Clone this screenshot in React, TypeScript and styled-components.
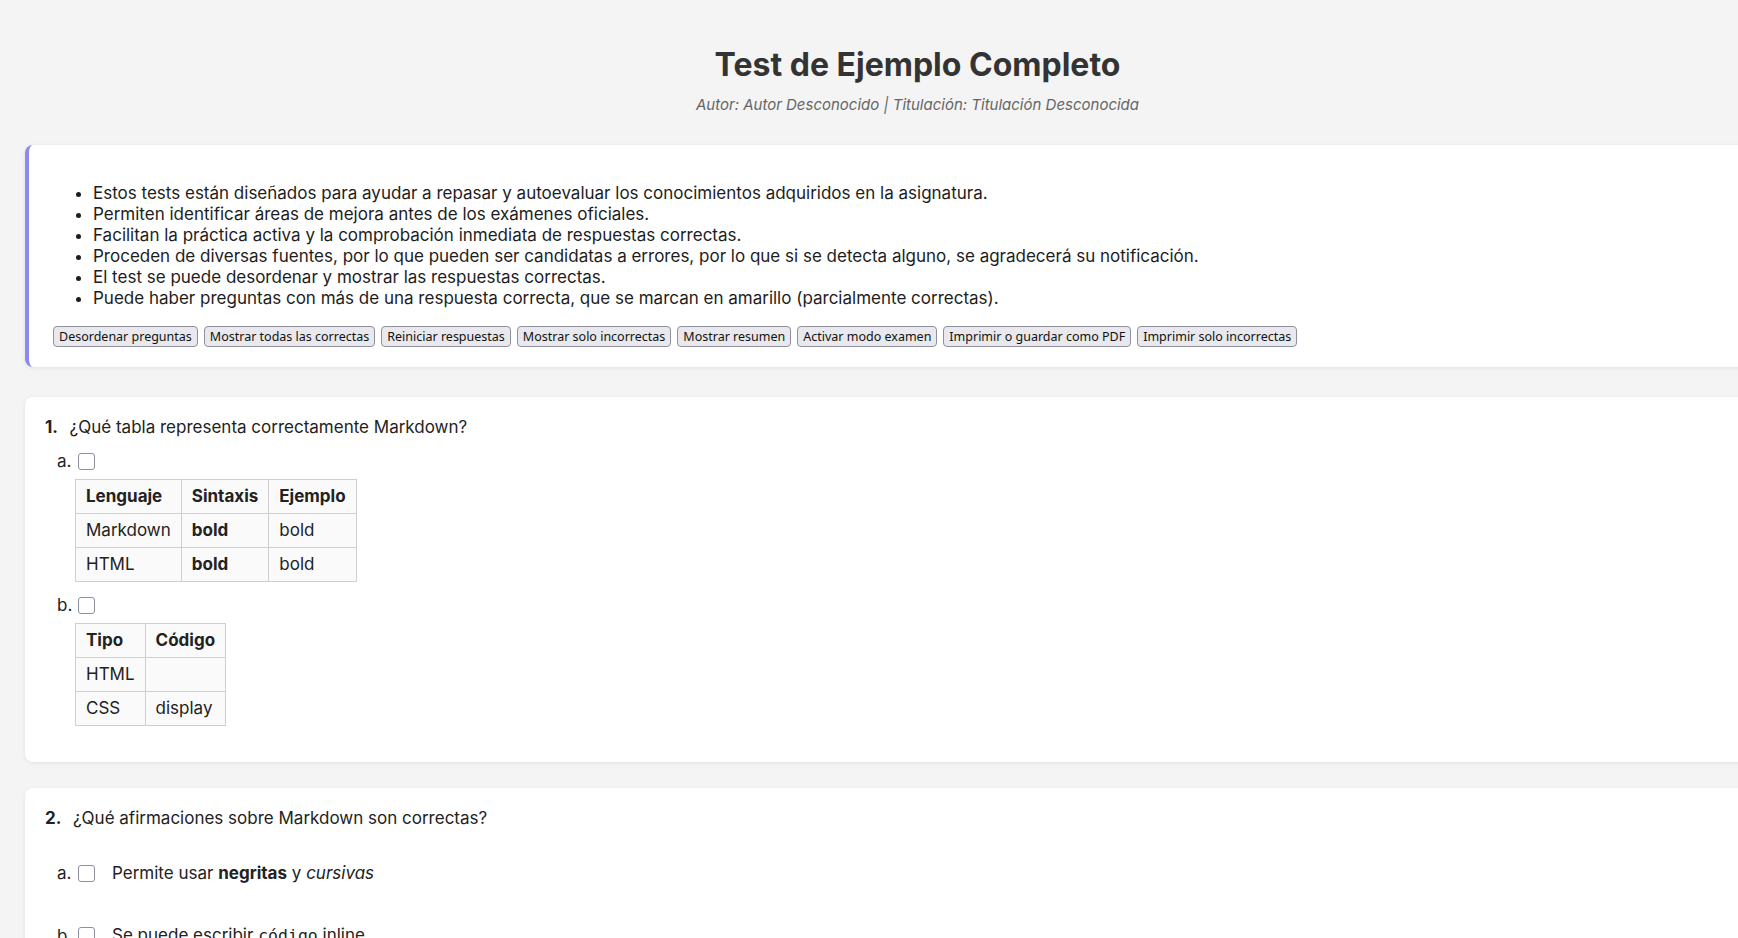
import React from 'react';
import styled, { createGlobalStyle } from 'styled-components';

const GlobalStyle = createGlobalStyle`
  html, body {
    margin: 0;
    padding: 0;
    overflow: hidden;
    background: #f4f4f4;
  }
  body {
    font-family: Inter, "Noto Sans", sans-serif;
    color: #222;
  }
  * { box-sizing: border-box; }
`;

const Page = styled.div`
  width: 1835px;
  padding: 0 25px 40px;
`;

const Header = styled.header`
  text-align: center;
  padding-top: 45px;
  margin-bottom: 31px;
`;

const Title = styled.h1`
  margin: 0;
  font-size: 32px;
  line-height: 40px;
  font-weight: 700;
  color: #333;
`;

const Subtitle = styled.p`
  margin: 11px 0 0;
  font-size: 15px;
  line-height: 18px;
  font-style: italic;
  color: #666;
`;

const Card = styled.section<{ $accent?: boolean }>`
  background: #fff;
  border-radius: 8px;
  box-shadow: 0 1px 4px rgba(0, 0, 0, 0.08);
  border-left: ${(p) => (p.$accent ? '4px solid #8c8af2' : 'none')};
  padding: ${(p) => (p.$accent ? '20px 24px 20px 24px' : '18px 20px 36px 20px')};
  margin-bottom: ${(p) => (p.$accent ? '30px' : '26px')};
`;

const IntroList = styled.ul`
  margin: 18px 0 17px;
  padding-left: 40px;
  font-size: 17px;
  line-height: 21px;
  color: #1d1d1d;
`;

const Toolbar = styled.div`
  display: flex;
  flex-wrap: wrap;
  gap: 6px;
`;

const ToolButton = styled.button`
  font-family: "Noto Sans", sans-serif;
  font-size: 12.5px;
  line-height: 17px;
  color: #111;
  background: #e9e9ed;
  border: 1px solid #8f8f9d;
  border-radius: 4px;
  padding: 1px 5px;
  height: 21px;
  cursor: pointer;
`;

const QuestionTitle = styled.div`
  font-size: 17px;
  line-height: 24px;
  color: #222;
`;

const Num = styled.span`
  font-weight: 700;
  margin-right: 11.5px;
`;

const OptionList = styled.div<{ $spaced?: boolean }>`
  padding-left: 12px;
  margin-top: ${(p) => (p.$spaced ? '31px' : '10px')};
  display: flex;
  flex-direction: column;
  align-items: flex-start;
  gap: ${(p) => (p.$spaced ? '38px' : '11px')};
`;

const Option = styled.div`
  display: flex;
  flex-direction: column;
  align-items: flex-start;
  gap: 6px;
`;

const OptionHead = styled.label`
  display: flex;
  align-items: center;
  font-size: 17px;
  line-height: 24px;
  color: #222;
`;

const Letter = styled.span`
  min-width: 21px;
`;

const Check = styled.input.attrs({ type: 'checkbox' })`
  appearance: none;
  margin: 0;
  width: 17px;
  height: 17px;
  border: 1px solid #8f8f9d;
  border-radius: 3px;
  background: #fff;
  flex: none;
`;

const OptionText = styled.span`
  margin-left: 17px;
`;

const Code = styled.code`
  font-family: "DejaVu Sans Mono", "Liberation Mono", monospace;
  font-size: 16.5px;
`;

const Table = styled.table`
  border-collapse: collapse;
  margin-left: 18px;
  font-size: 17px;
  color: #222;
`;

const Cell = styled.td<{ $head?: boolean }>`
  border: 1px solid #cfcfcf;
  background: #fafafa;
  padding: 6px 10px;
  line-height: 21px;
  font-weight: ${(p) => (p.$head ? 700 : 400)};
  text-align: left;
`;

const intro = [
  'Estos tests están diseñados para ayudar a repasar y autoevaluar los conocimientos adquiridos en la asignatura.',
  'Permiten identificar áreas de mejora antes de los exámenes oficiales.',
  'Facilitan la práctica activa y la comprobación inmediata de respuestas correctas.',
  'Proceden de diversas fuentes, por lo que pueden ser candidatas a errores, por lo que si se detecta alguno, se agradecerá su notificación.',
  'El test se puede desordenar y mostrar las respuestas correctas.',
  'Puede haber preguntas con más de una respuesta correcta, que se marcan en amarillo (parcialmente correctas).',
];

const buttons = [
  'Desordenar preguntas',
  'Mostrar todas las correctas',
  'Reiniciar respuestas',
  'Mostrar solo incorrectas',
  'Mostrar resumen',
  'Activar modo examen',
  'Imprimir o guardar como PDF',
  'Imprimir solo incorrectas',
];

type Row = React.ReactNode[];

const DataTable: React.FC<{ head: string[]; rows: Row[] }> = ({ head, rows }) => (
  <Table>
    <tbody>
      <tr>
        {head.map((h) => (
          <Cell as="th" $head key={h}>
            {h}
          </Cell>
        ))}
      </tr>
      {rows.map((r, i) => (
        <tr key={i}>
          {r.map((c, j) => (
            <Cell key={j}>{c}</Cell>
          ))}
        </tr>
      ))}
    </tbody>
  </Table>
);

export default function App() {
  return (
    <>
      <GlobalStyle />
      <Page>
        <Header>
          <Title>Test de Ejemplo Completo</Title>
          <Subtitle>Autor: Autor Desconocido | Titulación: Titulación Desconocida</Subtitle>
        </Header>

        <Card $accent>
          <IntroList>
            {intro.map((t) => (
              <li key={t}>{t}</li>
            ))}
          </IntroList>
          <Toolbar>
            {buttons.map((b) => (
              <ToolButton key={b}>{b}</ToolButton>
            ))}
          </Toolbar>
        </Card>

        <Card>
          <QuestionTitle>
            <Num>1.</Num>¿Qué tabla representa correctamente Markdown?
          </QuestionTitle>
          <OptionList>
            <Option>
              <OptionHead>
                <Letter>a.</Letter>
                <Check />
              </OptionHead>
              <DataTable
                head={['Lenguaje', 'Sintaxis', 'Ejemplo']}
                rows={[
                  ['Markdown', <strong>bold</strong>, 'bold'],
                  ['HTML', <strong>bold</strong>, 'bold'],
                ]}
              />
            </Option>
            <Option>
              <OptionHead>
                <Letter>b.</Letter>
                <Check />
              </OptionHead>
              <DataTable
                head={['Tipo', 'Código']}
                rows={[
                  ['HTML', ''],
                  ['CSS', 'display'],
                ]}
              />
            </Option>
          </OptionList>
        </Card>

        <Card>
          <QuestionTitle>
            <Num>2.</Num>¿Qué afirmaciones sobre Markdown son correctas?
          </QuestionTitle>
          <OptionList $spaced>
            <OptionHead>
              <Letter>a.</Letter>
              <Check />
              <OptionText>
                Permite usar <strong>negritas</strong> y <em>cursivas</em>
              </OptionText>
            </OptionHead>
            <OptionHead>
              <Letter>b.</Letter>
              <Check />
              <OptionText>
                Se puede escribir <Code>código</Code> inline
              </OptionText>
            </OptionHead>
            <OptionHead>
              <Letter>c.</Letter>
              <Check />
              <OptionText>Las listas se crean con guiones</OptionText>
            </OptionHead>
          </OptionList>
        </Card>
      </Page>
    </>
  );
}
